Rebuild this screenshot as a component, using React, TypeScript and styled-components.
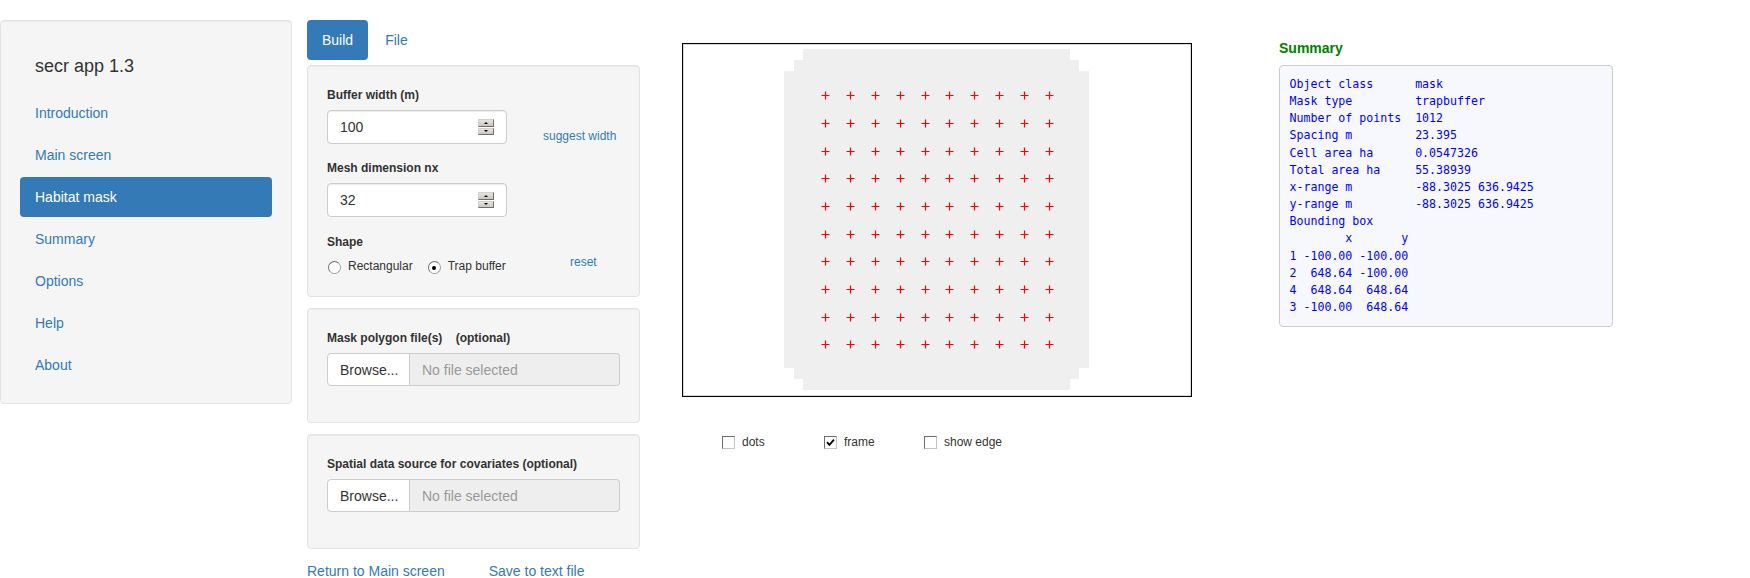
import React from "react";
import styled, { createGlobalStyle } from "styled-components";

const Global = createGlobalStyle`
  html, body { margin: 0; padding: 0; background: #fff; }
  body {
    font-family: "Liberation Sans", Arial, sans-serif;
    font-size: 14px;
    line-height: 1.42857;
    color: #333;
  }
  *, *::before, *::after { box-sizing: border-box; }
`;

const Page = styled.div`
  display: flex;
  align-items: flex-start;
  padding-top: 20px;
  width: 1750px;
  height: 578px;
  overflow: hidden;
`;

const Well = styled.div`
  background: #f5f5f5;
  border: 1px solid #e3e3e3;
  border-radius: 4px;
  box-shadow: inset 0 1px 1px rgba(0, 0, 0, 0.05);
  padding: 19px;
`;

const Sidebar = styled(Well)`
  flex: none;
  width: 292px;
  padding-bottom: 18px;
`;

const AppTitle = styled.h4`
  margin: 16px 0 17px;
  padding-left: 15px;
  font-size: 18px;
  line-height: 20px;
  font-weight: 500;
  color: #333;
`;

const NavList = styled.nav`
  display: flex;
  flex-direction: column;
  gap: 2px;
`;

const NavPill = styled.a<{ $active?: boolean }>`
  display: block;
  padding: 10px 15px;
  line-height: 20px;
  border-radius: 4px;
  text-decoration: none;
  color: ${(p) => (p.$active ? "#fff" : "#337ab7")};
  background: ${(p) => (p.$active ? "#337ab7" : "transparent")};
`;

const MiddleColumn = styled.section`
  flex: none;
  width: 333px;
  margin-left: 15px;
`;

const Tabs = styled.div`
  display: flex;
  gap: 2px;
`;

const TabPill = styled.a<{ $active?: boolean }>`
  display: block;
  padding: 10px 15px;
  line-height: 20px;
  border-radius: 4px;
  text-decoration: none;
  color: ${(p) => (p.$active ? "#fff" : "#337ab7")};
  background: ${(p) => (p.$active ? "#337ab7" : "transparent")};
`;

const Panels = styled.div`
  display: flex;
  flex-direction: column;
  gap: 11px;
  margin-top: 5px;
`;

const FieldLabel = styled.label`
  display: block;
  font-size: 12px;
  font-weight: bold;
  line-height: 20px;
  margin-bottom: 5px;
  white-space: pre;
`;

const FieldGroup = styled.div<{ $gap?: number }>`
  margin-top: ${(p) => p.$gap ?? 0}px;
`;

const LinkRow = styled.div<{ $left: number }>`
  display: grid;
  grid-template-columns: ${(p) => p.$left}px 1fr;
`;

const SmallLink = styled.a<{ $top?: number }>`
  font-size: 12px;
  line-height: 16px;
  color: #337ab7;
  text-decoration: none;
  white-space: nowrap;
  margin-top: ${(p) => p.$top ?? 0}px;
`;

const BottomLink = styled(SmallLink)`
  align-self: end;
`;

const NumberBox = styled.div`
  position: relative;
  width: 180px;
  height: 34px;
  padding: 6px 12px;
  font-size: 14px;
  line-height: 20px;
  color: #333;
  background: #fff;
  border: 1px solid #ccc;
  border-radius: 4px;
  box-shadow: inset 0 1px 1px rgba(0, 0, 0, 0.075);
`;

const Spinner = styled.div`
  position: absolute;
  right: 12px;
  top: 8px;
  width: 16px;
  height: 16px;
  display: flex;
  flex-direction: column;
  gap: 1px;
`;

const SpinButton = styled.span<{ $down?: boolean }>`
  flex: 1;
  display: flex;
  align-items: center;
  justify-content: center;
  background: linear-gradient(#e6e4dd, #c9c6bd);
  border: 1px solid #6f6f6f;
  border-top-color: #d0d0d0;
  border-left-color: #d0d0d0;
  &::after {
    content: "";
    width: 0;
    height: 0;
    border-left: 2.5px solid transparent;
    border-right: 2.5px solid transparent;
    ${(p) => (p.$down ? "border-top: 2.5px solid #000;" : "border-bottom: 2.5px solid #000;")}
  }
`;

const RadioRow = styled.div`
  display: flex;
  align-items: center;
  height: 20px;
  gap: 15px;
  padding-left: 1px;
`;

const Option = styled.span`
  display: inline-flex;
  align-items: center;
  font-size: 12px;
  color: #333;
`;

const RadioDot = styled.span<{ $checked?: boolean }>`
  width: 13px;
  height: 13px;
  margin-right: 7px;
  margin-top: 2px;
  border-radius: 50%;
  background: #fff;
  border: 1px solid #a0a0a0;
  border-top-color: #6d6d6d;
  border-left-color: #6d6d6d;
  display: flex;
  align-items: center;
  justify-content: center;
  &::after {
    content: "";
    width: 4px;
    height: 4px;
    border-radius: 50%;
    background: ${(p) => (p.$checked ? "#000" : "transparent")};
  }
`;

const FileGroup = styled.div`
  padding-bottom: 17px;
`;

const FileInput = styled.div`
  display: flex;
  height: 33px;
  font-size: 14px;
  line-height: 20px;
`;

const BrowseButton = styled.span`
  flex: none;
  width: 83px;
  padding: 6px 12px;
  color: #333;
  background: #fff;
  border: 1px solid #ccc;
  border-radius: 4px 0 0 4px;
`;

const FileName = styled.span`
  flex: 1;
  padding: 6px 12px;
  color: #999;
  background: #eee;
  border: 1px solid #ccc;
  border-left: 0;
  border-radius: 0 4px 4px 0;
`;

const FooterLinks = styled.div`
  display: flex;
  gap: 44px;
  margin-top: 12px;
  line-height: 20px;
`;

const FooterLink = styled.a`
  color: #337ab7;
  text-decoration: none;
`;

const PlotColumn = styled.section`
  flex: none;
  width: 510px;
  margin-left: 42px;
  margin-top: 23px;
`;

const CheckRow = styled.div`
  display: flex;
  margin-top: 35px;
  padding-left: 40px;
  line-height: 20px;
`;

const CheckItem = styled(Option)<{ $w: number }>`
  width: ${(p) => p.$w}px;
`;

const CheckBox = styled.span`
  width: 13px;
  height: 13px;
  margin-right: 7px;
  background: #fff;
  border: 1px solid #c4c4c4;
  border-top-color: #6d6d6d;
  border-left-color: #6d6d6d;
  display: flex;
  align-items: center;
  justify-content: center;
`;

const SummaryColumn = styled.section`
  flex: none;
  width: 334px;
  margin-left: 87px;
`;

const SummaryTitle = styled.div`
  margin-top: 18px;
  font-size: 14px;
  font-weight: bold;
  line-height: 20px;
  color: #008000;
`;

const Pre = styled.pre`
  margin: 7px 0 0;
  padding: 10px 9.5px;
  background: #f7f8fd;
  border: 1px solid #ccc;
  border-radius: 4px;
  color: #0000ff;
  font-family: "DejaVu Sans Mono", "Liberation Mono", monospace;
  font-size: 11.6px;
  line-height: 17.15px;
  white-space: pre;
`;

const SpinControl = () => (
  <Spinner>
    <SpinButton />
    <SpinButton $down />
  </Spinner>
);

const MaskPlot = () => {
  const crosses: string[] = [];
  for (let j = 0; j < 10; j++) {
    for (let i = 0; i < 10; i++) {
      const cx = Math.round(143.4 + i * 24.8) + 0.5;
      const cy = Math.round(52.3 + j * 27.67) + 0.5;
      crosses.push(`M${cx - 4} ${cy}H${cx + 4}M${cx} ${cy - 4}V${cy + 4}`);
    }
  }
  const mask =
    "121,6 388,6 388,17 397,17 397,28 407,28 407,325 397,325 397,336 388,336 388,347 121,347 121,336 112,336 112,325 102,325 102,28 112,28 112,17 121,17";
  return (
    <svg width="510" height="354" viewBox="0 0 510 354" style={{ display: "block" }}>
      <rect x="0" y="0" width="510" height="354" fill="#fff" />
      <polygon points={mask} fill="#efefef" />
      <path d={crosses.join("")} stroke="#ff0000" strokeWidth="1.2" fill="none" />
      <rect x="0.5" y="0.5" width="509" height="353" fill="none" stroke="#000" strokeWidth="1.3" />
    </svg>
  );
};

const summaryText = `Object class      mask
Mask type         trapbuffer
Number of points  1012
Spacing m         23.395
Cell area ha      0.0547326
Total area ha     55.38939
x-range m         -88.3025 636.9425
y-range m         -88.3025 636.9425
Bounding box
        x       y
1 -100.00 -100.00
2  648.64 -100.00
4  648.64  648.64
3 -100.00  648.64`;

const navItems = ["Introduction", "Main screen", "Habitat mask", "Summary", "Options", "Help", "About"];

export default function App() {
  return (
    <>
      <Global />
      <Page>
        <Sidebar>
          <AppTitle>secr app 1.3</AppTitle>
          <NavList>
            {navItems.map((n) => (
              <NavPill key={n} $active={n === "Habitat mask"}>
                {n}
              </NavPill>
            ))}
          </NavList>
        </Sidebar>

        <MiddleColumn>
          <Tabs>
            <TabPill $active>Build</TabPill>
            <TabPill>File</TabPill>
          </Tabs>
          <Panels>
            <Well>
              <LinkRow $left={216}>
                <div>
                  <FieldLabel>Buffer width (m)</FieldLabel>
                  <NumberBox>
                    100
                    <SpinControl />
                  </NumberBox>
                </div>
                <BottomLink>suggest width</BottomLink>
              </LinkRow>
              <FieldGroup $gap={14}>
                <FieldLabel>Mesh dimension nx</FieldLabel>
                <NumberBox>
                  32
                  <SpinControl />
                </NumberBox>
              </FieldGroup>
              <FieldGroup $gap={15}>
                <LinkRow $left={243}>
                  <div>
                    <FieldLabel>Shape</FieldLabel>
                    <RadioRow>
                      <Option>
                        <RadioDot />
                        Rectangular
                      </Option>
                      <Option>
                        <RadioDot $checked />
                        Trap buffer
                      </Option>
                    </RadioRow>
                  </div>
                  <SmallLink $top={22}>reset</SmallLink>
                </LinkRow>
              </FieldGroup>
            </Well>
            <Well>
              <FileGroup>
                <FieldLabel>{"Mask polygon file(s)    (optional)"}</FieldLabel>
                <FileInput>
                  <BrowseButton>Browse...</BrowseButton>
                  <FileName>No file selected</FileName>
                </FileInput>
              </FileGroup>
            </Well>
            <Well>
              <FileGroup>
                <FieldLabel>Spatial data source for covariates (optional)</FieldLabel>
                <FileInput>
                  <BrowseButton>Browse...</BrowseButton>
                  <FileName>No file selected</FileName>
                </FileInput>
              </FileGroup>
            </Well>
          </Panels>
          <FooterLinks>
            <FooterLink>Return to Main screen</FooterLink>
            <FooterLink>Save to text file</FooterLink>
          </FooterLinks>
        </MiddleColumn>

        <PlotColumn>
          <MaskPlot />
          <CheckRow>
            <CheckItem $w={102}>
              <CheckBox />
              dots
            </CheckItem>
            <CheckItem $w={100}>
              <CheckBox>
                <svg width="9" height="9" viewBox="0 0 9 9">
                  <path d="M1 4.2 L3.4 6.8 L8 1.6" stroke="#000" strokeWidth="1.8" fill="none" />
                </svg>
              </CheckBox>
              frame
            </CheckItem>
            <CheckItem $w={120}>
              <CheckBox />
              show edge
            </CheckItem>
          </CheckRow>
        </PlotColumn>

        <SummaryColumn>
          <SummaryTitle>Summary</SummaryTitle>
          <Pre>{summaryText}</Pre>
        </SummaryColumn>
      </Page>
    </>
  );
}
